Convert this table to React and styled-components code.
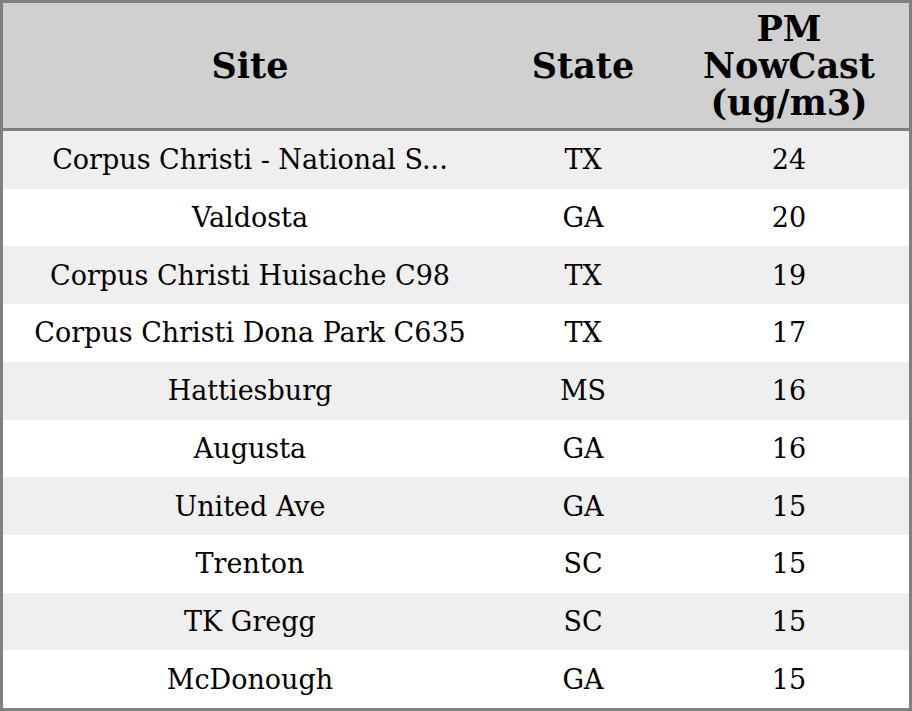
import React from 'react';
import styled, { createGlobalStyle } from 'styled-components';

const GlobalStyle = createGlobalStyle`
  html, body {
    margin: 0;
    padding: 0;
    background: #ffffff;
  }
  * {
    box-sizing: border-box;
  }
`;

const columns = '494px 172px 1fr';

const Frame = styled.div`
  display: flex;
  flex-direction: column;
  width: 912px;
  height: 711px;
  border: 3px solid #808080;
  font-family: 'DejaVu Serif', 'Liberation Serif', serif;
  color: #000;
`;

const HeaderRow = styled.div`
  display: grid;
  grid-template-columns: ${columns};
  height: 128px;
  flex: none;
  background: #d0d0d0;
  border-bottom: 3px solid #808080;
`;

const HeadCell = styled.div`
  display: flex;
  align-items: center;
  justify-content: center;
  text-align: center;
  font-size: 35px;
  font-weight: bold;
  line-height: 37px;
`;

const Row = styled.div`
  display: grid;
  grid-template-columns: ${columns};
  flex: 1;
  background: ${(p) => (p.$striped ? '#efefef' : '#ffffff')};
`;

const Cell = styled.div`
  display: flex;
  align-items: center;
  justify-content: center;
  font-size: 27px;
  white-space: nowrap;
`;

const rows = [
  ['Corpus Christi - National S...', 'TX', 24],
  ['Valdosta', 'GA', 20],
  ['Corpus Christi Huisache C98', 'TX', 19],
  ['Corpus Christi Dona Park C635', 'TX', 17],
  ['Hattiesburg', 'MS', 16],
  ['Augusta', 'GA', 16],
  ['United Ave', 'GA', 15],
  ['Trenton', 'SC', 15],
  ['TK Gregg', 'SC', 15],
  ['McDonough', 'GA', 15],
];

export default function App() {
  return (
    <>
      <GlobalStyle />
      <Frame>
        <HeaderRow>
          <HeadCell>Site</HeadCell>
          <HeadCell>State</HeadCell>
          <HeadCell>
            PM
            <br />
            NowCast
            <br />
            (ug/m3)
          </HeadCell>
        </HeaderRow>
        {rows.map(([site, state, value], i) => (
          <Row key={site} $striped={i % 2 === 0}>
            <Cell>{site}</Cell>
            <Cell>{state}</Cell>
            <Cell>{value}</Cell>
          </Row>
        ))}
      </Frame>
    </>
  );
}
